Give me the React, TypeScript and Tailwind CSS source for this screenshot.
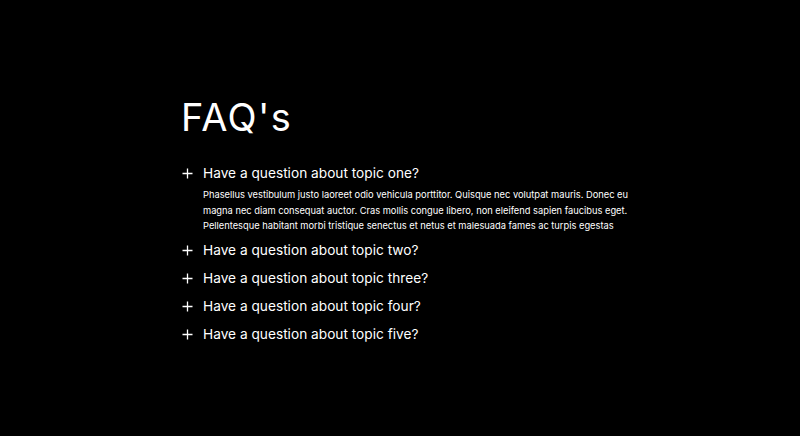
const faqs = [
  {
    q: 'Have a question about topic one?',
    a: 'Phasellus vestibulum justo laoreet odio vehicula porttitor. Quisque nec volutpat mauris. Donec eu magna nec diam consequat auctor. Cras mollis congue libero, non eleifend sapien faucibus eget. Pellentesque habitant morbi tristique senectus et netus et malesuada fames ac turpis egestas',
  },
  { q: 'Have a question about topic two?' },
  { q: 'Have a question about topic three?' },
  { q: 'Have a question about topic four?' },
  { q: 'Have a question about topic five?' },
];

function Plus() {
  return (
    <svg width="11" height="11" viewBox="0 0 11 11" className="shrink-0">
      <path d="M5.5 0.5v10M0.5 5.5h10" stroke="white" strokeWidth="1.3" />
    </svg>
  );
}

export default function App() {
  return (
    <div className="h-[436px] bg-black text-white font-['Inter',sans-serif]">
      <div className="pl-[181px] pt-[98px]">
        <h1 className="text-[38px] font-normal leading-none [font-optical-sizing:none] [font-variation-settings:'opsz'_14] tracking-[0.035em] mb-[27px]">FAQ's</h1>
        <ul className="flex flex-col gap-[8px]">
          {faqs.map((f) => (
            <li key={f.q}>
              <div className="flex items-center gap-[10px] h-[20px] pl-[1px]">
                <Plus />
                <span className="text-[13.7px]">{f.q}</span>
              </div>
              {f.a && (
                <p className="ml-[22px] mt-[4px] -mb-[1px] w-[434px] text-[9.3px] leading-[15.5px]">{f.a}</p>
              )}
            </li>
          ))}
        </ul>
      </div>
    </div>
  );
}
